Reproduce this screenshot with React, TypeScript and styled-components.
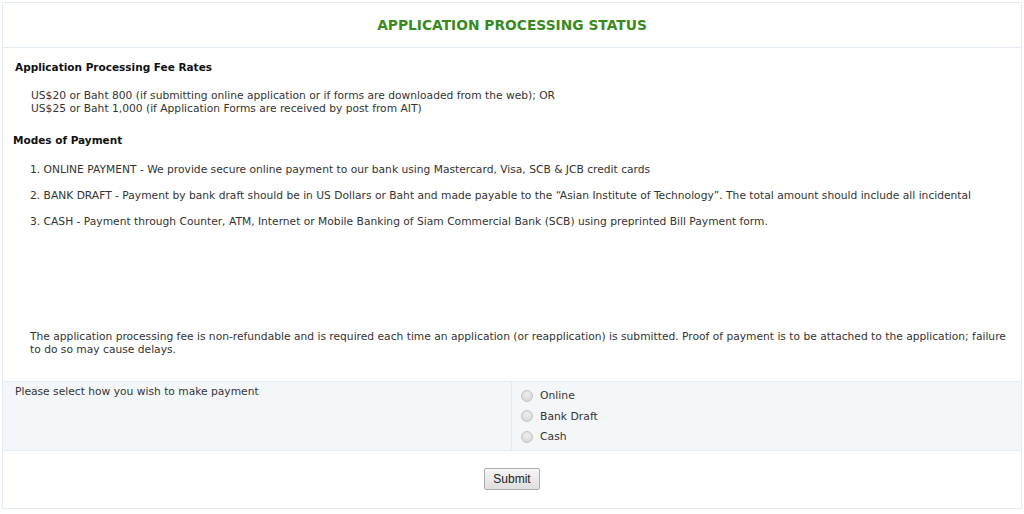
import styled, { createGlobalStyle } from "styled-components";

const GlobalStyle = createGlobalStyle`
  html, body {
    margin: 0;
    padding: 0;
    background: #ffffff;
  }
  body {
    font-family: "DejaVu Sans", Verdana, sans-serif;
    font-size: 10.7px;
    color: #333333;
  }
`;

const Page = styled.div`
  padding: 2px 2px 3px 2px;
`;

const Card = styled.div`
  border: 1px solid #e4ebf2;
  height: 507px;
  box-sizing: border-box;
  display: flex;
  flex-direction: column;
`;

const Header = styled.div`
  height: 44px;
  border-bottom: 1px solid #e4ebf2;
  display: flex;
  align-items: center;
  justify-content: center;
  flex-shrink: 0;
`;

const Title = styled.h1`
  margin: 0;
  font-size: 13.8px;
  font-weight: bold;
  color: #3a8a22;
`;

const Content = styled.div`
  height: 334px;
  padding: 13px 0 0 0;
  box-sizing: border-box;
  border-bottom: 1px solid #e4ebf2;
  line-height: 13px;
`;

const SectionTitle = styled.h2<{ $indent: number }>`
  margin: 0;
  font-size: 10.5px;
  font-weight: bold;
  color: #111111;
  padding-left: ${(p) => p.$indent}px;
`;

const FeeBlock = styled.div`
  padding-left: 28px;
  margin: 15px 0 19px 0;
`;

const PayList = styled.ol`
  margin: 16px 0 0 0;
  padding: 0 0 0 27px;
  list-style: none;
  display: flex;
  flex-direction: column;
  gap: 13px;
`;

const Note = styled.p`
  margin: 102px 0 0 0;
  padding: 0 10px 0 27px;
`;

const SelectRow = styled.div`
  display: grid;
  grid-template-columns: 509px 1fr;
  height: 68px;
  background: #f4f7fa;
  border-bottom: 1px solid #e4ebf2;
`;

const SelectLabel = styled.div`
  padding: 3px 0 0 12px;
  line-height: 13px;
  border-right: 1px solid #e1e8f0;
`;

const Options = styled.div`
  display: flex;
  flex-direction: column;
  gap: 7.5px;
  padding: 7px 0 0 9px;
`;

const Option = styled.label`
  display: flex;
  align-items: center;
  gap: 7px;
  line-height: 13px;
  font-size: 10.8px;
`;

const Radio = styled.span`
  width: 12px;
  height: 12px;
  border-radius: 50%;
  box-sizing: border-box;
  border: 1px solid #c4c4c4;
  background: radial-gradient(circle at 50% 35%, #efefef 0%, #d6d6d6 85%);
`;

const Footer = styled.div`
  flex: 1;
  display: flex;
  justify-content: center;
  padding-top: 17px;
`;

const SubmitButton = styled.button`
  width: 56px;
  height: 22px;
  padding: 0;
  font-family: "Liberation Sans", Arial, sans-serif;
  font-size: 12px;
  color: #222222;
  border: 1px solid #acacac;
  border-radius: 2px;
  background: linear-gradient(#f6f6f6, #dedede);
`;

const App = () => (
  <Page>
    <GlobalStyle />
    <Card>
      <Header>
        <Title>APPLICATION PROCESSING STATUS</Title>
      </Header>
      <Content>
        <SectionTitle $indent={12}>Application Processing Fee Rates</SectionTitle>
        <FeeBlock>
          US$20 or Baht 800 (if submitting online application or if forms are downloaded from the web); OR
          <br />
          US$25 or Baht 1,000 (if Application Forms are received by post from AIT)
        </FeeBlock>
        <SectionTitle $indent={10}>Modes of Payment</SectionTitle>
        <PayList>
          <li>1. ONLINE PAYMENT - We provide secure online payment to our bank using Mastercard, Visa, SCB &amp; JCB credit cards</li>
          <li>
            2. BANK DRAFT - Payment by bank draft should be in US Dollars or Baht and made payable to the “Asian Institute of
            Technology”. The total amount should include all incidental
          </li>
          <li>3. CASH - Payment through Counter, ATM, Internet or Mobile Banking of Siam Commercial Bank (SCB) using preprinted Bill Payment form.</li>
        </PayList>
        <Note>
          The application processing fee is non-refundable and is required each time an application (or reapplication) is
          submitted. Proof of payment is to be attached to the application; failure to do so may cause delays.
        </Note>
      </Content>
      <SelectRow>
        <SelectLabel>Please select how you wish to make payment</SelectLabel>
        <Options>
          {["Online", "Bank Draft", "Cash"].map((o) => (
            <Option key={o}>
              <Radio />
              {o}
            </Option>
          ))}
        </Options>
      </SelectRow>
      <Footer>
        <div>
          <SubmitButton>Submit</SubmitButton>
        </div>
      </Footer>
    </Card>
  </Page>
);

export default App;
